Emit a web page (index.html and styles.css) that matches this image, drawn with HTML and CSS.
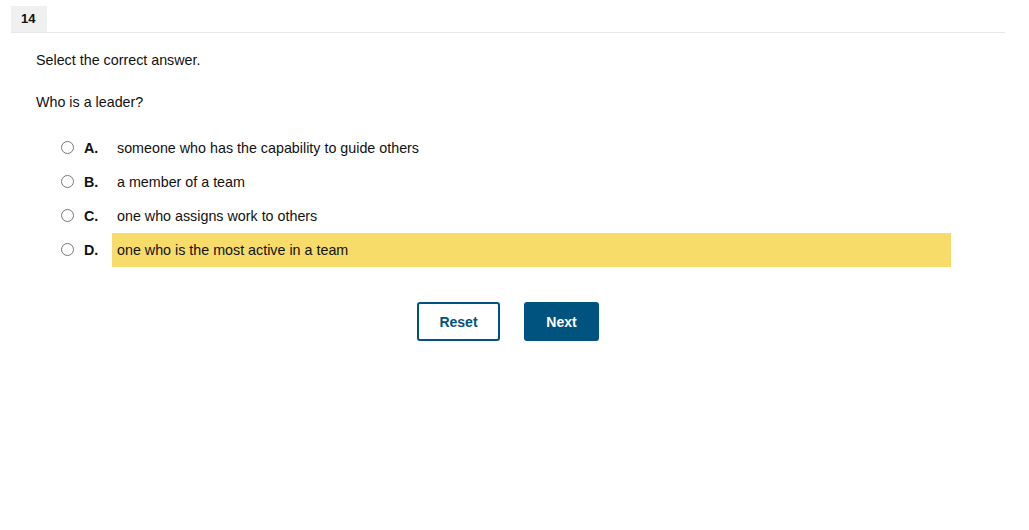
FILE: index.html
```html
<!DOCTYPE html>
<html lang="en">
  <head>
    <meta charset="UTF-8" />
    <meta name="viewport" content="width=device-width, initial-scale=1.0" />
    <title>Question 14</title>
    <link rel="stylesheet" href="styles.css">
  </head>
  <body>
    <div id="container">
      <div id="top">
        <span class="qnum">14</span>
      </div>
      <div id="question">
        <p class="prompt">Select the correct answer.</p>
        <p class="stem">Who is a leader?</p>
        <ul class="options">
          <li class="option">
            <input type="radio" name="answer" id="optA" />
            <label class="letter" for="optA">A.</label>
            <label class="text" for="optA">someone who has the capability to guide others</label>
          </li>
          <li class="option">
            <input type="radio" name="answer" id="optB" />
            <label class="letter" for="optB">B.</label>
            <label class="text" for="optB">a member of a team</label>
          </li>
          <li class="option">
            <input type="radio" name="answer" id="optC" />
            <label class="letter" for="optC">C.</label>
            <label class="text" for="optC">one who assigns work to others</label>
          </li>
          <li class="option">
            <input type="radio" name="answer" id="optD" />
            <label class="letter" for="optD">D.</label>
            <label class="text highlight" for="optD">one who is the most active in a team</label>
          </li>
        </ul>
        <div id="buttons">
          <button class="btn reset">Reset</button>
          <button class="btn next">Next</button>
        </div>
      </div>
    </div>
  </body>
</html>
```

FILE: styles.css
```css
* {
  margin: 0;
  padding: 0;
  box-sizing: border-box;
}
body {
  font-family: "Liberation Sans", Arial, sans-serif;
  font-size: 14.3px;
  color: #111;
  background: #fff;
}
#container {
  margin: 0 24px 0 11px;
  padding-top: 6px;
}
#top {
  display: flex;
  border-bottom: 1px solid #e6e6e6;
}
.qnum {
  display: block;
  width: 36px;
  height: 26px;
  line-height: 25px;
  padding-left: 10px;
  background-color: #f0f0f0;
  font-size: 13px;
  font-weight: bold;
}
#question {
  padding: 19px 0 0 25px;
}
.prompt,
.stem {
  line-height: 16px;
}
.stem {
  margin-top: 26px;
}
.options {
  list-style: none;
  margin: 21px 54px 0 25px;
}
.option {
  display: flex;
  align-items: stretch;
  height: 34px;
}
.option input {
  width: 13px;
  height: 13px;
  margin: 10px 10px 0 0;
  accent-color: #00527f;
}
.letter {
  width: 28px;
  font-weight: bold;
  line-height: 34px;
}
.text {
  flex: 1;
  padding-left: 5px;
  line-height: 34px;
}
.highlight {
  background-color: #f7dc6a;
}
#buttons {
  display: flex;
  justify-content: center;
  gap: 24px;
  margin: 35px 0 0 -25px;
}
.btn {
  height: 39px;
  border: 2px solid #00527f;
  border-radius: 3px;
  font-family: "Liberation Sans", Arial, sans-serif;
  font-size: 14px;
  font-weight: bold;
  cursor: pointer;
}
.reset {
  width: 83px;
  background: #fff;
  color: #00527f;
}
.next {
  width: 75px;
  background: #00527f;
  color: #fff;
}
```
